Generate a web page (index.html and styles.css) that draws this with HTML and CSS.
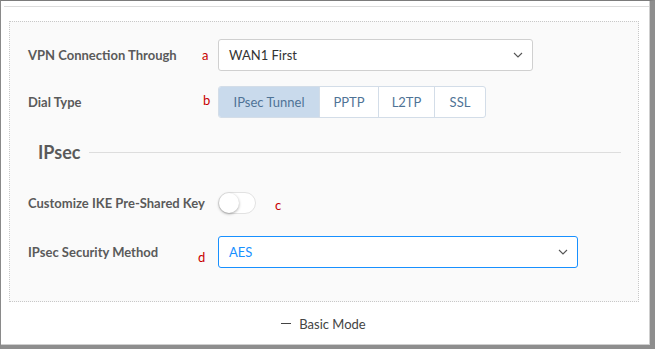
FILE: index.html
```
<!DOCTYPE html>
<html>
<head>
<meta charset="utf-8">
<link rel="stylesheet" href="styles.css">
</head>
<body>
<div class="frame">
  <div class="topline"></div>
  <div class="panel">
    <div class="row row-first">
      <div class="label">VPN Connection Through</div>
      <span class="note note-a">a</span>
      <div class="select select-wan">
        <span class="select-text">WAN1 First</span>
        <svg class="chev" width="10" height="6" viewBox="0 0 10 6"><path d="M1 1 L5 5 L9 1" fill="none" stroke="#555" stroke-width="1.1"/></svg>
      </div>
    </div>
    <div class="row">
      <div class="label">Dial Type</div>
      <span class="note note-b">b</span>
      <div class="seg">
        <span class="seg-item seg-active seg-ipsec">IPsec Tunnel</span>
        <span class="seg-item seg-pptp">PPTP</span>
        <span class="seg-item seg-l2tp">L2TP</span>
        <span class="seg-item seg-ssl">SSL</span>
      </div>
    </div>
    <div class="heading">
      <span class="heading-text">IPsec</span>
      <span class="heading-line"></span>
    </div>
    <div class="row row-toggle">
      <div class="label">Customize IKE Pre-Shared Key</div>
      <div class="toggle"><span class="knob"></span></div>
      <span class="note note-c">c</span>
    </div>
    <div class="row row-last">
      <div class="label">IPsec Security Method</div>
      <span class="note note-d">d</span>
      <div class="select select-aes">
        <span class="select-text aes-text">AES</span>
        <svg class="chev" width="10" height="6" viewBox="0 0 10 6"><path d="M1 1 L5 5 L9 1" fill="none" stroke="#555" stroke-width="1.1"/></svg>
      </div>
    </div>
  </div>
  <div class="footer">
    <span class="dash"></span>
    <span class="footer-text">Basic Mode</span>
  </div>
</div>
</body>
</html>
```

FILE: styles.css
```
* { box-sizing: border-box; }
html, body { margin: 0; padding: 0; background: #fff; }
body { font-family: "Lato", "Open Sans", sans-serif; font-size: 13px; color: #333; }

.frame {
  width: 655px;
  height: 349px;
  border-top: 1px solid #7c7c7c;
  border-left: 1px solid #8a8a8a;
  border-right: 5px solid #8e8e8e;
  border-bottom: 4px solid #8e8e8e;
  box-shadow: inset -1px -1px 0 #cfcfcf;
  display: flex;
  flex-direction: column;
  background: #fff;
}

.topline {
  height: 1px;
  background: #dcdcdc;
  margin: 5px 1px 0 3px;
}

.panel {
  margin: 14px 0 0 8px;
  width: 630px;
  height: 281px;
  border: 1px dotted #c8c8c8;
  background: #fafafa;
  padding: 17px 0 0 18px;
  display: flex;
  flex-direction: column;
}

.row {
  position: relative;
  display: flex;
  align-items: center;
  height: 32px;
  margin-top: 15px;
}
.row-first { margin-top: 0; }
.row-toggle { margin-top: 21px; }
.row-last { margin-top: 17px; }

.label {
  width: 190px;
  flex: none;
  font-weight: 700;
  font-size: 13px;
  color: #5a5a5a;
}

.note {
  position: absolute;
  color: #c80000;
  font-size: 13px;
  font-family: "Lato", sans-serif;
}
.note-a { left: 174px; top: 8px; }
.note-b { left: 175px; top: 6px; }
.note-c { left: 247px; top: 10px; }
.note-d { left: 170px; top: 13px; }

.select {
  height: 32px;
  background: #fff;
  border: 1px solid #d0d0d0;
  border-radius: 3px;
  display: flex;
  align-items: center;
  justify-content: space-between;
  padding: 0 9px 0 10px;
}
.select-wan { width: 315px; }
.select-aes { width: 360px; border-color: #1890ff; }
.select-text { font-size: 13px; color: #333; }
.aes-text { color: #1890ff; }
.chev { display: block; }

.seg {
  display: flex;
  height: 32px;
  border: 1px solid #d3dde8;
  border-radius: 3px;
  overflow: hidden;
  background: #fff;
}
.seg-item {
  display: flex;
  align-items: center;
  justify-content: center;
  color: #4f7396;
  font-size: 13px;
  border-left: 1px solid #d3dde8;
}
.seg-item:first-child { border-left: none; }
.seg-active { background: #c9daec; }
.seg-ipsec { width: 100px; }
.seg-pptp { width: 59px; }
.seg-l2tp { width: 56px; }
.seg-ssl { width: 51px; }

.heading {
  display: flex;
  align-items: center;
  height: 28px;
  margin-top: 20px;
  padding-left: 10px;
  padding-right: 17px;
}
.heading-text {
  font-size: 18px;
  font-weight: 700;
  color: #5a5a5a;
}
.heading-line {
  flex: 1;
  height: 1px;
  background: #dddddd;
  margin-left: 9px;
}

.toggle {
  width: 38px;
  height: 22px;
  border: 1px solid #e2e2e2;
  border-radius: 11px;
  background: #fff;
  position: relative;
}
.knob {
  position: absolute;
  left: 0;
  top: 0;
  width: 20px;
  height: 20px;
  border-radius: 50%;
  background: #fff;
  box-shadow: 0 1px 3px rgba(0,0,0,0.35);
}

.footer {
  flex: 1;
  display: flex;
  align-items: center;
  justify-content: center;
  color: #444;
  font-size: 13px;
  padding-right: 4px;
}
.dash {
  width: 10px;
  height: 1px;
  background: #444;
  margin-right: 8px;
}
```
